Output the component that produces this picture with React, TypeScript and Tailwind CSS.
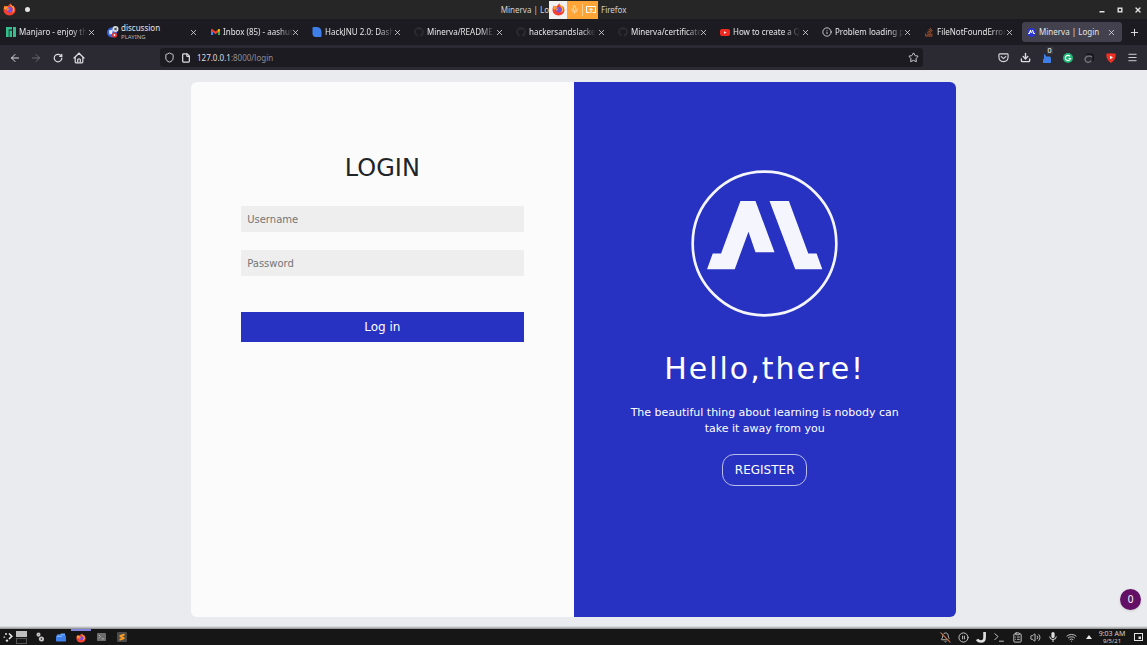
import type { ReactNode } from "react";
import {
  ArrowLeft,
  ArrowRight,
  BellOff,
  CirclePause,
  ClipboardList,
  Download,
  File,
  House,
  Info,
  Menu,
  Mic,
  Plus,
  RotateCw,
  Shield,
  Star,
  Volume2,
  Wifi,
  X,
} from "lucide-react";
import { FaGithub, FaStackOverflow } from "react-icons/fa";

function FirefoxIcon({ className }: { className: string }) {
  return (
    <svg viewBox="0 0 24 24" className={className} aria-hidden="true">
      <path
        d="M12 23C5.500 23 1 18.500 1 12.500 1 9 2 6.500 3.500 4.500L4.500 7 7 5.500 9 6.500C10 4 12 2 14.500 1 14.500 3.500 16.500 4.500 18.500 6.500L19 5C21.500 7.500 23 10 23 13 23 18.500 18.500 23 12 23Z"
        fill="#f5402f"
      />
      <path
        d="M14.500 1C13 4 14.500 5.500 17 8 19.500 11 19 15 16 17.500 20 17 21.500 14 21 10.500L19 5 18.500 6.500C16.500 4.500 14.500 3.500 14.500 1Z"
        fill="#ffb13b"
      />
      <path d="M3.500 4.500L4.500 7 7 5.500 9 7 12 8.500 8 10.500 4 13 1.500 9.500Z" fill="#ff9a2b" />
      <circle cx="12.500" cy="12.500" r="5" fill="#7b4fe0" />
      <path d="M7 10.500L12.500 10.500 10.500 12.500 8.500 14.500Z" fill="#ffab36" />
    </svg>
  );
}

function MinervaMark() {
  return (
    <>
      <path d="M181 123H226L283 276H226L205 215 164 327H81L98 280H123Z" />
      <path d="M268 123H326L384 280H409L426 327H345Z" />
    </>
  );
}

function MinervaLogo() {
  return (
    <svg viewBox="33 30 440 440" className="size-[147px]" role="img" aria-label="Minerva" fill="#f5f6fd">
      <circle cx="253" cy="250" r="215" fill="none" stroke="#f5f6fd" strokeWidth="8" />
      <MinervaMark />
    </svg>
  );
}

const ManjaroIcon = (
  <svg viewBox="0 0 10 10" className="size-[10px]" fill="#35bf8c" aria-hidden="true">
    <path d="M0 0H6V2.600H2.700V10H0Z" />
    <path d="M3.400 3.600H6V10H3.400Z" />
    <path d="M7 0H10V10H7Z" />
  </svg>
);

const DiscussionIcon = (
  <svg viewBox="0 0 12 12" className="size-3 shrink-0" aria-hidden="true">
    <circle cx="5" cy="6.500" r="5" fill="#3a62d8" />
    <path d="M2 4.500L6 3.500 5 8 2.500 8.500Z" fill="#e8ecff" />
    <circle cx="8.500" cy="3" r="3" fill="#d9dade" />
    <path d="M7 2.500H8L9.500 1.500V4.500L8 3.600H7Z" fill="#333" />
    <circle cx="7.500" cy="9" r="2.600" fill="#e5352f" />
    <circle cx="7.500" cy="9" r="0.900" fill="#fff" />
  </svg>
);

const GmailIcon = (
  <svg viewBox="0 0 24 18" className="w-[9px]" aria-hidden="true">
    <path d="M0 3V16.500Q0 18 1.500 18H5.500V8Z" fill="#4285f4" />
    <path d="M24 3V16.500Q24 18 22.500 18H18.500V8Z" fill="#34a853" />
    <path d="M0 3C0 0 3 -0.500 5 1L12 6.500 19 1V8.500L12 14 5.500 8.500 0 4.500Z" fill="#ea4335" />
    <path d="M18.500 1.300C21 -0.800 24 0.500 24 3V4.500L18.500 8.500Z" fill="#fbbc04" />
  </svg>
);

const HackIcon = (
  <svg viewBox="0 0 10 10" className="size-[10px]" aria-hidden="true">
    <path d="M0.500 1Q0.500 0 1.500 0H5Q9.500 0.500 9.500 5V9Q9.500 10 8.500 10H3Q0.500 9.500 0.500 7Z" fill="#3f7fea" />
  </svg>
);

const YoutubeIcon = (
  <svg viewBox="0 0 10 7" className="w-[10px]" aria-hidden="true">
    <rect width="10" height="7" rx="2" fill="#f02a20" />
    <path d="M4 2.200L6.600 3.500 4 4.800Z" fill="#fff" />
  </svg>
);

const MinervaFavicon = (
  <svg viewBox="33 30 440 440" className="size-[9px]" aria-hidden="true">
    <circle cx="253" cy="250" r="220" fill="#2a36cf" />
    <g fill="#fff">
      <MinervaMark />
    </g>
  </svg>
);

const githubIcon = <FaGithub className="size-[10px] text-[#2d2c34]" />;

type TabData = { id: string; title: string; icon: ReactNode; note?: string; active?: boolean };

const tabs: TabData[] = [
  { id: "manjaro", title: "Manjaro - enjoy th", icon: ManjaroIcon },
  { id: "discussion", title: "discussion", icon: DiscussionIcon, note: "PLAYING" },
  { id: "inbox", title: "Inbox (85) - aashut", icon: GmailIcon },
  { id: "hackjnu", title: "HackJNU 2.0: Dash", icon: HackIcon },
  { id: "readme", title: "Minerva/README.", icon: githubIcon },
  { id: "hackers", title: "hackersandslacke", icon: githubIcon },
  { id: "certificates", title: "Minerva/certificate", icon: githubIcon },
  { id: "youtube", title: "How to create a Q", icon: YoutubeIcon },
  { id: "problem", title: "Problem loading p", icon: <Info className="size-[10px]" /> },
  {
    id: "stackoverflow",
    title: "FileNotFoundError",
    icon: <FaStackOverflow className="size-[10px] text-[#b3592b]" />,
  },
  { id: "minerva", title: "Minerva | Login", icon: MinervaFavicon, active: true },
];

function Tab({ title, icon, note, active }: TabData) {
  const fades = !note && !active;
  return (
    <li
      className={
        active
          ? "my-[3px] ml-[2px] flex min-w-0 flex-1 items-center rounded-[3px] bg-[#42414d] pr-[6px] pl-1"
          : "flex min-w-0 flex-1 items-center pr-[6px] pl-[6px]"
      }
    >
      <button type="button" className="flex min-w-0 flex-1 items-center gap-[3px] text-left">
        <span className="flex w-[10px] shrink-0 items-center justify-center">{icon}</span>
        <span
          className={
            fades
              ? "whitespace-nowrap [mask-image:linear-gradient(to_right,black_78%,transparent)]"
              : "whitespace-nowrap"
          }
        >
          <span className={note ? "block leading-[10px]" : "block leading-[14px]"}>{title}</span>
          {note && <span className="block text-[6px] leading-2 text-[#b5b5bb]">{note}</span>}
        </span>
      </button>
      <button type="button" aria-label={`Close ${title}`} className="shrink-0">
        <X className="size-[9px]" />
      </button>
    </li>
  );
}

function TitleBar() {
  return (
    <header className="grid h-[19px] shrink-0 grid-cols-[1fr_auto_1fr] items-center bg-[#262626] text-[8px] text-[#d2d2d2]">
      <div className="flex items-center">
        <span className="flex flex-1 items-center gap-[9px] pl-[3px]">
          <FirefoxIcon className="size-[13px]" />
          <span className="size-[5px] rounded-full bg-[#e6e6e6]" />
        </span>
        <span>Minerva | Lo</span>
      </div>
      <div className="flex h-[18px] items-center bg-[#ffa436] text-white">
        <span className="flex h-full w-[18px] items-center justify-center bg-[#f1f1f1]">
          <FirefoxIcon className="size-[13px]" />
        </span>
        <button type="button" aria-label="Microphone" className="flex w-[15px] justify-center">
          <Mic className="size-[9px] text-[#ffe9c9]" />
        </button>
        <button
          type="button"
          aria-label="Share window"
          className="flex h-3 w-4 items-center justify-center border-l border-[#ffd08e]"
        >
          <svg viewBox="0 0 10 9" className="w-[10px]" fill="none" stroke="#fff" aria-hidden="true">
            <path d="M3.500 7.500H0.500V1.500H9.500V7.500H6.500" />
            <path d="M5 8V4M3.300 5L5 3.300 6.700 5" />
          </svg>
        </button>
      </div>
      <div className="flex items-center pl-[3px]">
        <span className="flex-1">Firefox</span>
        <div className="flex w-[54px] text-[#e3e3e3]">
          <button type="button" aria-label="Minimize" className="flex flex-1 items-center justify-center">
            <svg viewBox="0 0 6 6" className="size-[6px]" aria-hidden="true">
              <path d="M0.500 4H5.500V5.500H0.500Z" fill="currentColor" />
            </svg>
          </button>
          <button type="button" aria-label="Maximize" className="flex flex-1 items-center justify-center">
            <svg viewBox="0 0 6 6" className="size-[6px]" aria-hidden="true">
              <rect x="1.200" y="1.200" width="3.600" height="3.600" fill="none" stroke="currentColor" strokeWidth="1.400" />
            </svg>
          </button>
          <button type="button" aria-label="Close window" className="flex flex-1 items-center justify-center">
            <X className="size-2" strokeWidth={4} />
          </button>
        </div>
      </div>
    </header>
  );
}

function NavBar() {
  return (
    <nav className="flex h-[25px] shrink-0 items-center bg-[#2b2a33] px-1 text-[#dcdce0]">
      <div className="grid w-[86px] grid-cols-4 justify-items-center">
        <button type="button" aria-label="Back">
          <ArrowLeft className="size-3" />
        </button>
        <button type="button" aria-label="Forward" className="text-[#6c6b74]">
          <ArrowRight className="size-3" />
        </button>
        <button type="button" aria-label="Reload">
          <RotateCw className="size-[10px]" strokeWidth={3} />
        </button>
        <button type="button" aria-label="Home">
          <svg viewBox="0 0 12 12" className="size-3" fill="none" stroke="currentColor" strokeWidth="1.200" aria-hidden="true">
            <path d="M1 6L6 1.200 11 6M2.200 5.200V10Q2.200 10.800 3 10.800H9Q9.800 10.800 9.800 10V5.200" strokeLinecap="round" />
            <path d="M4.700 10.500V7.500Q6 6 7.300 7.500V10.500" />
          </svg>
        </button>
      </div>
      <div className="mr-[70px] ml-[70px] flex h-[19px] flex-1 items-center gap-[6px] rounded-[3px] bg-[#1c1b22] px-1">
        <Shield className="size-[11px]" />
        <File className="size-[10px]" strokeWidth={3} />
        <label htmlFor="address" className="relative flex-1 text-[8px] leading-3">
          <span aria-hidden="true" className="text-[#8f8e96]">
            <span className="text-[#dcdce0]">127.0.0.1</span>:8000/login
          </span>
          <input
            id="address"
            aria-label="Address"
            className="absolute inset-0 w-full bg-transparent text-transparent outline-none"
          />
        </label>
        <button type="button" aria-label="Bookmark">
          <Star className="size-[11px]" />
        </button>
      </div>
      <div className="grid w-[150px] grid-cols-7 items-center justify-items-center">
        <button type="button" aria-label="Pocket">
          <svg viewBox="0 0 12 12" className="size-[11px]" fill="none" stroke="currentColor" strokeWidth="1.200" aria-hidden="true">
            <path d="M2 2H10Q11 2 11 3V5.500Q11 10.500 6 10.500 1 10.500 1 5.500V3Q1 2 2 2Z" />
            <path d="M3.500 5L6 7.200 8.500 5" strokeLinecap="round" />
          </svg>
        </button>
        <button type="button" aria-label="Downloads">
          <Download className="size-[11px]" strokeWidth={3} />
        </button>
        <button type="button" aria-label="Notifier" className="relative">
          <svg viewBox="0 0 10 10" className="size-[10px]" fill="#3f7ee6" aria-hidden="true">
            <path d="M2 0.500L4.500 3.500H8L9 5V10H1L1 7 2 5Z" />
          </svg>
          <span className="absolute -top-[6px] left-[5px] bg-[#3b3a43] px-px text-[7px] leading-[7px] text-white">0</span>
        </button>
        <button type="button" aria-label="Grammar">
          <svg viewBox="0 0 10 10" className="size-[10px]" fill="none" aria-hidden="true">
            <circle cx="5" cy="5" r="5" fill="#23b877" />
            <path d="M7 3.400A2.600 2.600 0 1 0 7.500 5.500H5.500" stroke="#fff" strokeWidth="1.100" />
          </svg>
        </button>
        <button type="button" aria-label="Extension">
          <svg viewBox="0 0 10 10" className="size-[10px]" fill="none" aria-hidden="true">
            <path d="M2.500 1.500Q9.300 -0.500 9.300 4V8" stroke="#15141a" strokeWidth="1.500" />
            <path d="M8 4Q6.500 2.800 4 3.200 1 4 1 6.500 1.500 9.500 4.500 9.300 6.500 9 7 7.500" stroke="#77767e" strokeWidth="1.300" />
          </svg>
        </button>
        <button type="button" aria-label="Video tools">
          <svg viewBox="0 0 10 10" className="size-[10px]" aria-hidden="true">
            <path d="M5 0.300L9.800 0.800Q9.800 7.500 5 10 0.200 7.500 0.200 0.800Z" fill="#ef3124" />
            <path d="M4 2.800L7 4.500 4 6.200Z" fill="#fff" />
          </svg>
        </button>
        <button type="button" aria-label="Menu">
          <Menu className="size-[11px]" />
        </button>
      </div>
    </nav>
  );
}

function LoginCard() {
  return (
    <div className="grid w-2/3 grid-cols-2 overflow-hidden rounded-[6px] font-['DejaVu_Sans',sans-serif]">
      <form className="flex flex-col bg-[#fbfbfb] px-[50px] pt-[68px]" onSubmit={(e) => e.preventDefault()}>
        <h1 className="text-center text-2xl leading-9 text-[#212529]">LOGIN</h1>
        <input
          type="text"
          aria-label="Username"
          placeholder="Username"
          className="mt-5 h-[26px] bg-[#eeeeee] px-[6px] text-[10px] text-[#212529] outline-none placeholder:text-[#757575]"
        />
        <input
          type="password"
          aria-label="Password"
          placeholder="Password"
          className="mt-[18px] h-[26px] bg-[#eeeeee] px-[6px] text-[10px] text-[#212529] outline-none placeholder:text-[#757575]"
        />
        <button type="submit" className="mt-9 h-[30px] bg-[#2732c2] text-xs text-white">
          Log in
        </button>
      </form>
      <section className="flex flex-col items-center bg-[#2732c2] px-[50px] pt-[88px] pb-8 text-center text-white">
        <MinervaLogo />
        <h2 className="mt-[34px] text-[30px] leading-9 tracking-[2px]">Hello,there!</h2>
        <p className="mt-[18px] text-[11px] leading-4">
          The beautiful thing about learning is nobody can take it away from you
        </p>
        <button type="button" className="mt-[17px] h-8 rounded-[12px] border border-[#b9bdec] px-3 text-xs">
          REGISTER
        </button>
      </section>
    </div>
  );
}

function TaskBar() {
  return (
    <footer className="flex h-4 shrink-0 items-center bg-[#161616] text-[#d0d0d0]">
      <div className="flex h-full items-center">
        <button type="button" aria-label="Launcher" className="flex w-[15px] justify-center">
          <svg viewBox="0 0 10 10" className="size-[10px]" aria-hidden="true">
            <circle cx="3" cy="2" r="1" fill="#ddd" />
            <circle cx="1.300" cy="5.200" r="0.900" fill="#aaa" />
            <circle cx="4" cy="8.600" r="1.200" fill="#ddd" />
            <path d="M6 1.500L8.800 4.200 6 7" fill="none" stroke="#eee" strokeWidth="1.600" />
          </svg>
        </button>
        <div className="flex w-[13px] flex-col items-center gap-px">
          <span className="h-[6px] w-[11px] bg-[#bdbdbd]" />
          <span className="h-[6px] w-[11px] border border-[#555]" />
        </div>
        <button type="button" aria-label="Settings" className="flex w-[23px] justify-center">
          <svg viewBox="0 0 10 10" className="size-[10px]" fill="none" stroke="#c4c4c4" aria-hidden="true">
            <circle cx="3.500" cy="2.600" r="1.200" strokeWidth="1.700" />
            <circle cx="6.400" cy="7" r="1.700" strokeWidth="1.800" />
          </svg>
        </button>
        <button type="button" aria-label="Files" className="flex w-5 justify-center">
          <svg viewBox="0 0 10 9" className="w-[10px]" aria-hidden="true">
            <path d="M1 1.500H4L5 0.500H9V3H1Z" fill="#62a5ff" />
            <rect y="2.500" width="10" height="6" rx="0.800" fill="#3f7fea" />
            <path d="M1 3.500H6" stroke="#8cbcff" strokeWidth="0.800" />
          </svg>
        </button>
        <button
          type="button"
          aria-label="Firefox"
          className="flex h-full w-5 items-center justify-center border-t-2 border-[#8084dc]"
        >
          <FirefoxIcon className="size-[10px]" />
        </button>
        <button type="button" aria-label="Terminal" className="flex w-5 justify-center">
          <svg viewBox="0 0 10 9" className="w-[9px]" aria-hidden="true">
            <rect width="10" height="9" rx="1" fill="#6c6c6c" />
            <path d="M2 2L4 4 2 6M5 6.500H8" fill="none" stroke="#b5b5b5" />
          </svg>
        </button>
        <button type="button" aria-label="Editor" className="flex w-[21px] justify-center">
          <svg viewBox="0 0 10 10" className="size-[10px]" aria-hidden="true">
            <rect width="10" height="10" rx="1" fill="#4a4a4a" />
            <path d="M7.500 1.500V3.500L5 4.400 7.500 5.200V7L2.500 8.700V6.700L5 5.900 2.500 5.100V3.200Z" fill="#ff9d1e" />
          </svg>
        </button>
      </div>
      <div className="ml-auto grid w-[162px] grid-cols-9 items-center justify-items-center">
        <svg viewBox="0 0 24 24" className="size-[11px]" aria-hidden="true">
          <BellOff size={24} color="#c4c4c4" />
          <path d="M2 2L22 22" stroke="#c4683c" strokeWidth="2.500" />
        </svg>
        <CirclePause className="size-[11px]" />
        <svg viewBox="0 0 10 10" className="size-[11px]" aria-hidden="true">
          <path d="M7.800 0V5Q7.800 8.600 4.500 8.600 2 8.600 1 6.800" fill="none" stroke="#e0e0e0" strokeWidth="2.400" />
        </svg>
        <svg viewBox="0 0 10 10" className="size-[10px]" fill="none" stroke="currentColor" strokeWidth="0.900" aria-hidden="true">
          <path d="M0.500 1.500L4 4.500 0.500 8M5 9.200H9.800" />
        </svg>
        <ClipboardList className="size-[11px]" />
        <Volume2 className="size-[11px]" />
        <svg viewBox="0 0 10 10" className="size-[10px]" aria-hidden="true">
          <rect x="3.400" y="0" width="3.200" height="6" rx="1.600" fill="#ddd" />
          <path d="M1.700 4.500Q1.700 7.500 5 7.500 8.300 7.500 8.300 4.500M5 7.500V10" fill="none" stroke="#ddd" />
        </svg>
        <Wifi className="size-[11px]" />
        <svg viewBox="0 0 6 4" className="w-[6px]" aria-hidden="true">
          <path d="M3 0L6 4H0Z" fill="#eee" />
        </svg>
      </div>
      <div className="w-7 text-center whitespace-nowrap">
        <div className="text-[7px] leading-2">9:03 AM</div>
        <div className="text-[6px] leading-[7px]">9/5/21</div>
      </div>
      <button type="button" aria-label="Show desktop" className="mr-1 ml-2 flex">
        <svg viewBox="0 0 9 8" className="w-[9px]" aria-hidden="true">
          <rect x="0.500" y="0.500" width="8" height="7" fill="none" stroke="#e5e5e5" />
          <path d="M4.500 3.500H7V6H4.500Z" fill="#ddd" />
        </svg>
      </button>
    </footer>
  );
}

export default function App() {
  return (
    <div className="flex min-h-screen flex-col font-['Noto_Sans',sans-serif]">
      <TitleBar />
      <div className="flex h-[26px] shrink-0 bg-[#1c1b22] text-[8px] text-[#e6e6e8]">
        <ul className="flex min-w-0 flex-1">
          {tabs.map((tab) => (
            <Tab key={tab.id} {...tab} />
          ))}
        </ul>
        <button type="button" aria-label="New tab" className="flex w-[25px] items-center justify-center">
          <Plus className="size-[11px]" />
        </button>
      </div>
      <NavBar />
      <main className="relative flex flex-1 justify-center bg-[#e9ebee] py-3 after:absolute after:inset-x-0 after:bottom-0 after:h-[3px] after:bg-linear-to-b after:from-transparent after:to-[#8b8b8b]">
        <LoginCard />
        <button
          type="button"
          className="absolute right-[6px] bottom-[19px] size-[21px] rounded-full bg-[#640f66] text-[10px] text-white shadow-sm"
        >
          0
        </button>
      </main>
      <TaskBar />
    </div>
  );
}
